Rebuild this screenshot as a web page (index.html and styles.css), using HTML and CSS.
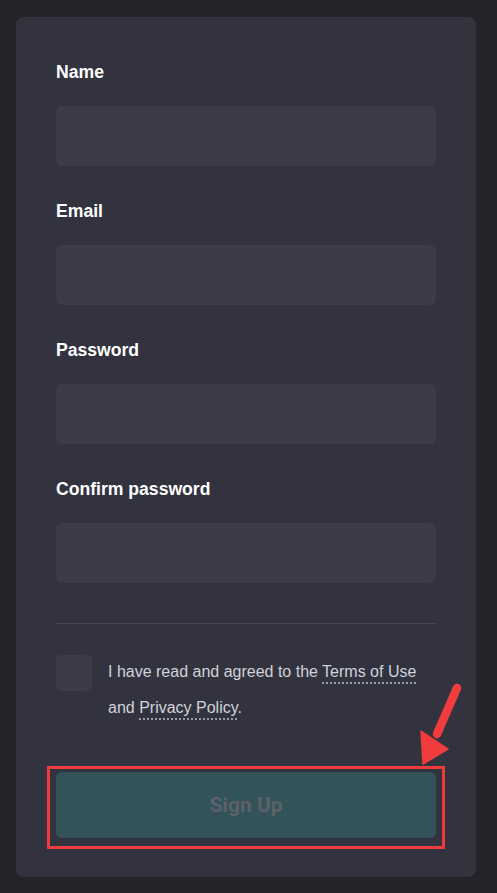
FILE: index.html
```html
<!DOCTYPE html>
<html>
<head>
<meta charset="utf-8">
<link rel="stylesheet" href="styles.css">
</head>
<body>
<div class="card">
  <div class="field">
    <label class="label">Name</label>
    <div class="input"></div>
  </div>
  <div class="field">
    <label class="label">Email</label>
    <div class="input"></div>
  </div>
  <div class="field">
    <label class="label">Password</label>
    <div class="input"></div>
  </div>
  <div class="field last">
    <label class="label">Confirm password</label>
    <div class="input"></div>
  </div>
  <div class="divider"></div>
  <div class="agree">
    <div class="check"></div>
    <p class="agree-text">I have read and agreed to the <a class="link">Terms of Use</a> and <a class="link">Privacy Policy</a>.</p>
  </div>
  <button class="btn">Sign Up</button>
</div>
<div class="highlight"></div>
<svg class="arrow" width="70" height="100" viewBox="0 0 70 100">
  <line x1="57" y1="18" x2="37" y2="64" stroke="#f03c3c" stroke-width="8.5" stroke-linecap="round"/>
  <polygon points="21,61 48,79 23,94" fill="#f03c3c" stroke="#f03c3c" stroke-width="1.5" stroke-linejoin="round"/>
</svg>
</body>
</html>
```
FILE: styles.css
```css
html, body {
  margin: 0;
  padding: 0;
}
body {
  background: #232329;
  font-family: "Liberation Sans", Arial, sans-serif;
  width: 497px;
  height: 893px;
  overflow: hidden;
  position: relative;
}
.card {
  margin: 17px 0 0 16px;
  width: 460px;
  height: 860px;
  box-sizing: border-box;
  padding: 45px 40px 39px 40px;
  background: #33333f;
  border-radius: 8px;
  display: flex;
  flex-direction: column;
}
.field {
  display: flex;
  flex-direction: column;
  margin-bottom: 35px;
}
.field.last {
  margin-bottom: 0;
}
.label {
  font-size: 17.6px;
  font-weight: bold;
  line-height: 20px;
  color: #ffffff;
  margin-bottom: 24px;
}
.input {
  height: 60px;
  background: #3b3b49;
  border-radius: 6px;
}
.divider {
  height: 1px;
  background: #454552;
  margin-top: 40px;
}
.agree {
  display: flex;
  gap: 16px;
  margin-top: 30px;
}
.check {
  flex: 0 0 36px;
  height: 36px;
  margin-top: 1px;
  background: #3b3b49;
  border-radius: 5px;
}
.agree-text {
  margin: 0;
  font-size: 16px;
  line-height: 36px;
  color: #cfd2da;
}
.link {
  text-decoration: underline dotted #9a9ca6;
  text-decoration-thickness: 2px;
  text-underline-offset: 5px;
}
.btn {
  margin-top: 46px;
  height: 66px;
  border: none;
  border-radius: 6px;
  background: #33535a;
  color: #5d6169;
  font-family: Roboto, "Liberation Sans", sans-serif;
  font-weight: bold;
  font-size: 21px;
  padding: 0;
}
.highlight {
  position: absolute;
  left: 47px;
  top: 766px;
  width: 398px;
  height: 83px;
  box-sizing: border-box;
  border: 3px solid #ef3b3b;
}
.arrow {
  position: absolute;
  left: 400px;
  top: 670px;
}
```
